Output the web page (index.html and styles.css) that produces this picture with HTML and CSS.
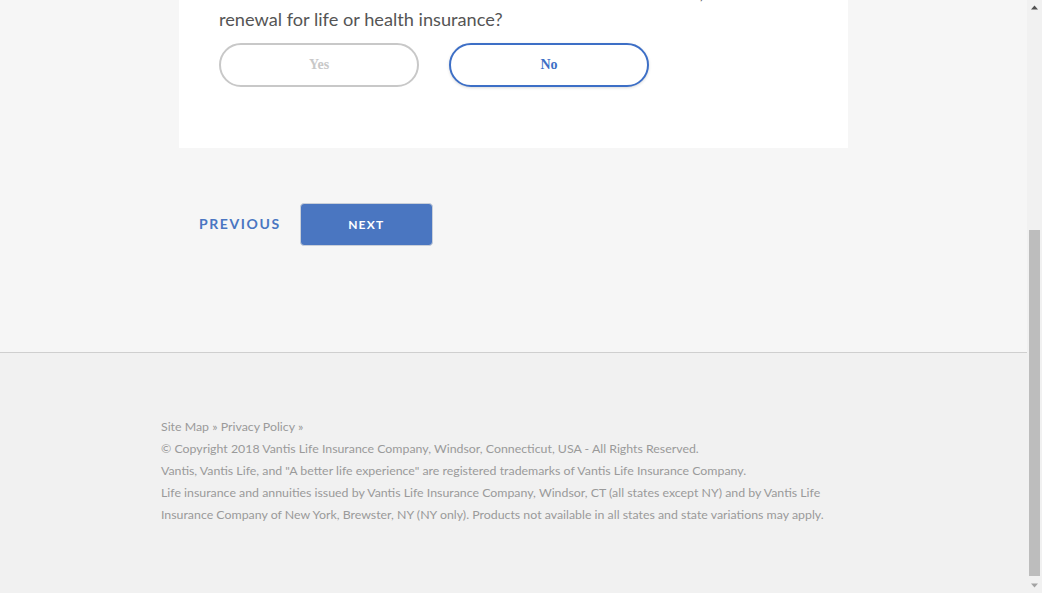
FILE: index.html
```html
<!DOCTYPE html>
<html lang="en">
<head>
<meta charset="utf-8">
<title>Vantis Life - Application</title>
<link rel="stylesheet" href="styles.css">
</head>
<body>
<main class="page">
  <section class="card">
    <div class="progress"><div class="progress-fill"></div></div>
    <h2 class="card-title">Health History</h2>
    <p class="question">Within the past 5 years, have you ever been declined, postponed, or<br>rated life or health insurance or been denied a reinstatement, reissue or<br>renewal for life or health insurance?</p>
    <div class="answers">
      <button class="answer">Yes</button>
      <button class="answer selected">No</button>
    </div>
  </section>
  <nav class="steps">
    <a class="prev" href="#">PREVIOUS</a>
    <button class="next">NEXT</button>
  </nav>
</main>
<footer class="footer">
  <div class="footer-inner">
    <p><a href="#">Site Map »</a> <a href="#">Privacy Policy »</a></p>
    <p>© Copyright 2018 Vantis Life Insurance Company, Windsor, Connecticut, USA - All Rights Reserved.</p>
    <p>Vantis, Vantis Life, and "A better life experience" are registered trademarks of Vantis Life Insurance Company.</p>
    <p>Life insurance and annuities issued by Vantis Life Insurance Company, Windsor, CT (all states except NY) and by Vantis Life Insurance Company of New York, Brewster, NY (NY only). Products not available in all states and state variations may apply.</p>
  </div>
</footer>
<div class="scrollbar" aria-hidden="true">
  <svg class="arrow arrow-up" width="15" height="15" viewBox="0 0 15 15"><path d="M4 9.5h7L7.5 5.5z" fill="#505050"/></svg>
  <div class="track"><div class="thumb"></div></div>
  <svg class="arrow arrow-down" width="15" height="15" viewBox="0 0 15 15"><path d="M4 5.5h7L7.5 9.5z" fill="#a3a3a3"/></svg>
</div>
<script src="script.js"></script>
</body>
</html>
```
FILE: styles.css
```css
html, body {
  margin: 0;
  padding: 0;
}
body {
  background: #f6f6f6;
  font-family: Lato, "Open Sans", sans-serif;
  color: #555;
  margin-right: 15px;
}
.page {
  padding-top: 60px;
}
.card {
  width: 669px;
  box-sizing: border-box;
  margin: 0 auto;
  background: #fff;
  padding: 40px 40px 61px;
}
.progress {
  height: 6px;
  background: #e6e6e6;
  border-radius: 3px;
  margin-bottom: 40px;
}
.progress-fill {
  width: 70%;
  height: 100%;
  background: #4a76c1;
  border-radius: 3px;
}
.card-title {
  margin: 0 0 24px;
  font-size: 26px;
  font-weight: 400;
  color: #333;
}
.question {
  margin: 0 0 10px;
  font-size: 18.2px;
  line-height: 27px;
  color: #555;
  white-space: nowrap;
}
.answers {
  display: flex;
  gap: 30px;
}
.answer {
  width: 200px;
  height: 44px;
  border: 2px solid #c8c8c8;
  border-radius: 22px;
  background: #fff;
  font-family: "Liberation Serif", serif;
  font-weight: 700;
  font-size: 14px;
  color: #c8c8c8;
  cursor: pointer;
}
.answer.selected {
  border-color: #3d6fc6;
  color: #3d6fc6;
  box-shadow: 0 1px 3px rgba(0,0,0,0.15);
}
.steps {
  width: 669px;
  box-sizing: border-box;
  margin: 55px auto 0;
  padding: 0 20px 106px;
  display: flex;
  align-items: center;
  gap: 19px;
}
.prev {
  font-size: 14px;
  font-weight: 700;
  letter-spacing: 1.6px;
  color: #4a76c2;
  text-decoration: none;
  margin-top: -2px;
}
.next {
  width: 133px;
  height: 43px;
  background: #4a76c1;
  border: 1px solid #c9cfd9;
  border-radius: 4px;
  color: #fff;
  font-family: Lato, sans-serif;
  font-weight: 700;
  font-size: 12px;
  letter-spacing: 1.2px;
  cursor: pointer;
}
.footer {
  border-top: 1px solid #cfcfcf;
  background: #f1f1f1;
  padding: 63px 0 67px;
}
.footer-inner {
  max-width: 705px;
  margin: 0 auto;
  font-size: 12.35px;
  line-height: 22px;
  color: #9a9a9a;
}
.footer-inner p {
  margin: 0;
}
.footer-inner a {
  color: #9a9a9a;
  text-decoration: none;
}
.scrollbar {
  position: fixed;
  top: 0;
  right: 0;
  width: 15px;
  height: 100vh;
  background: #f1f1f1;
  display: flex;
  flex-direction: column;
}
.arrow {
  display: block;
  flex: none;
}
.track {
  flex: 1;
  position: relative;
}
.thumb {
  position: absolute;
  left: 2px;
  right: 2px;
  top: 215px;
  bottom: 2px;
  background: #bdbdbd;
}
```
FILE: script.js
```js
function toBottom() {
  window.scrollTo(0, document.documentElement.scrollHeight);
}
toBottom();
window.addEventListener('load', toBottom);
```
